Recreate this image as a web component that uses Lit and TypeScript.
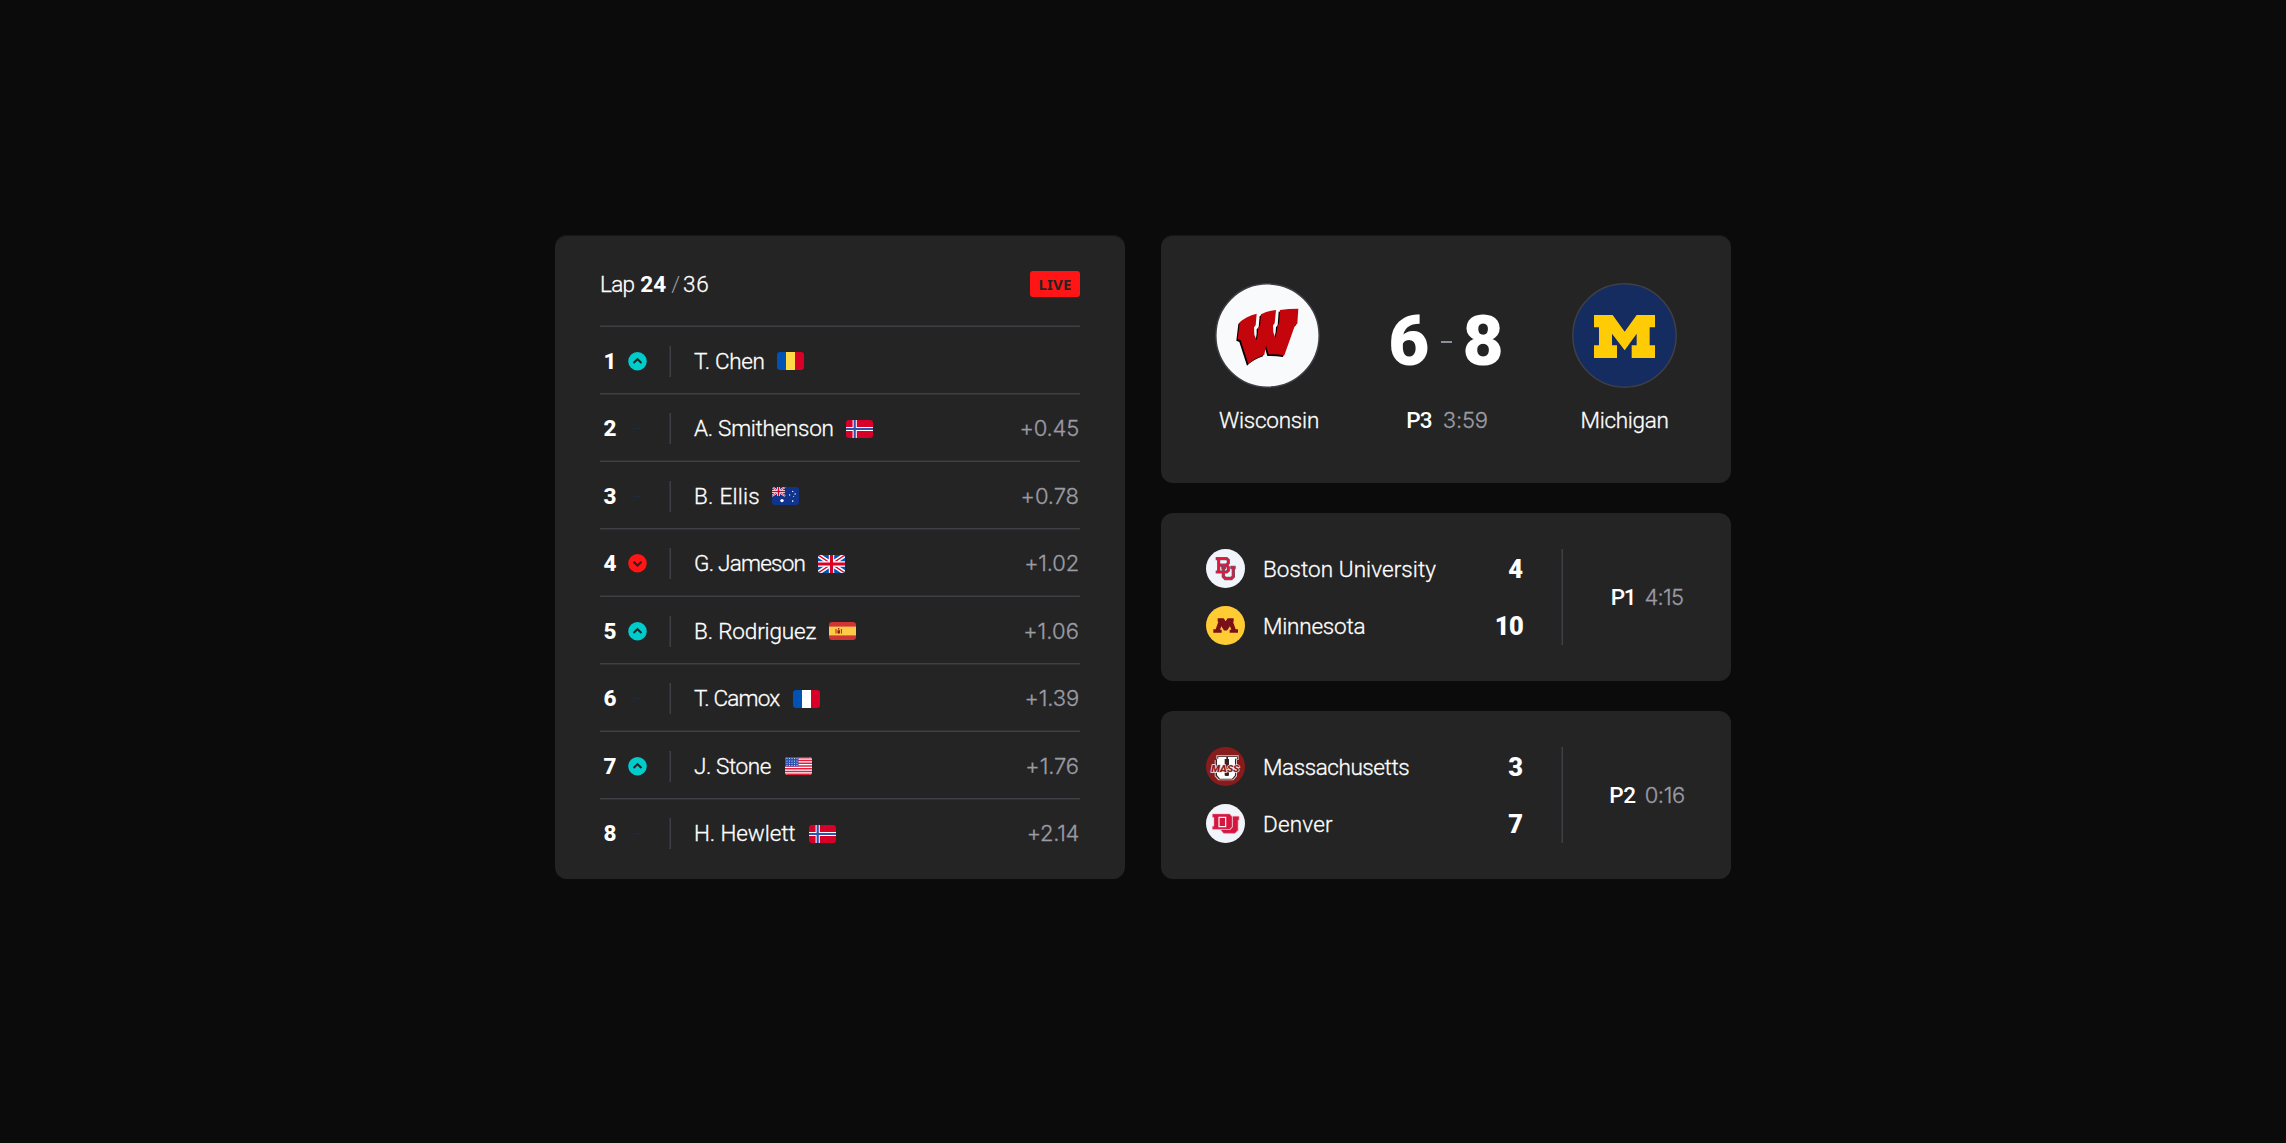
import { LitElement, html, svg, css, nothing, type TemplateResult, type SVGTemplateResult } from "lit";
import { customElement, property } from "lit/decorators.js";
import { classMap } from "lit/directives/class-map.js";
import { styleMap } from "lit/directives/style-map.js";

type Spaced = { text: string; tracking: number };
type Trend = "up" | "down" | "same";
interface Racer {
  pos: number;
  trend: Trend;
  name: Spaced;
  flag: string;
  flagGap: number;
  gap?: Spaced;
}
interface Side {
  name: Spaced;
  emblem: string;
  score: Spaced;
}
interface Game {
  sides: Side[];
  period: Spaced;
  clock: Spaced;
}

const s = (text: string, tracking = 0): Spaced => ({ text, tracking });

const racers: Racer[] = [
  { pos: 1, trend: "up", name: s("T. Chen", -0.34), flag: "ro", flagGap: 12 },
  { pos: 2, trend: "same", name: s("A. Smithenson", -0.28), flag: "no", flagGap: 12, gap: s("+0.45", -0.2) },
  { pos: 3, trend: "same", name: s("B. Ellis", 0.25), flag: "au", flagGap: 12, gap: s("+0.78", -0.07) },
  { pos: 4, trend: "down", name: s("G. Jameson", -0.75), flag: "gb", flagGap: 13, gap: s("+1.02", -0.19) },
  { pos: 5, trend: "up", name: s("B. Rodriguez", -0.15), flag: "es", flagGap: 13, gap: s("+1.06", 0.06) },
  { pos: 6, trend: "same", name: s("T. Camox", -0.8), flag: "fr", flagGap: 13.5, gap: s("+1.39", -0.12) },
  { pos: 7, trend: "up", name: s("J. Stone", -0.4), flag: "us", flagGap: 13.5, gap: s("+1.76", -0.1) },
  { pos: 8, trend: "same", name: s("H. Hewlett", -0.1), flag: "no", flagGap: 13, gap: s("+2.14", -0.35) },
];

const featured: Game = {
  sides: [
    { name: s("Wisconsin", -0.21), emblem: "wisconsin", score: s("6") },
    { name: s("Michigan", -0.3), emblem: "michigan", score: s("8") },
  ],
  period: s("P3", -0.8),
  clock: s("3:59", -0.2),
};

const games: Game[] = [
  {
    sides: [
      { name: s("Boston University", 0.07), emblem: "boston", score: s("4") },
      { name: s("Minnesota", -0.21), emblem: "minnesota", score: s("10", -0.7) },
    ],
    period: s("P1", -1.2),
    clock: s("4:15", -0.73),
  },
  {
    sides: [
      { name: s("Massachusetts", -0.42), emblem: "massachusetts", score: s("3") },
      { name: s("Denver", 0.2), emblem: "denver", score: s("7") },
    ],
    period: s("P2", -0.36),
    clock: s("0:16", -0.4),
  },
];

const stars = (rows: number, cols: number) => {
  const out: SVGTemplateResult[] = [];
  for (let r = 0; r < rows; r++)
    for (let c = 0; c < cols; c++)
      out.push(svg`<circle cx=${2 + c * 2.5} cy=${1.6 + r * 2.3} r="0.5" fill="#fff" />`);
  return out;
};

const FLAGS: Record<string, SVGTemplateResult> = {
  ro: svg`<rect width="9" height="18" fill="#0052b4"/><rect x="9" width="9" height="18" fill="#ffda44"/><rect x="18" width="9" height="18" fill="#d80027"/>`,
  fr: svg`<rect width="9" height="18" fill="#0052b4"/><rect x="9" width="9" height="18" fill="#fff"/><rect x="18" width="9" height="18" fill="#d80027"/>`,
  no: svg`<rect width="27" height="18" fill="#d80027"/><path d="M8.7 0V18M0 9H27" stroke="#fff" stroke-width="4.2"/><path d="M8.7 0V18M0 9H27" stroke="#2e52b2" stroke-width="2.2"/>`,
  gb: svg`<rect width="27" height="18" fill="#0052b4"/><path d="M0 0L27 18M27 0L0 18" stroke="#fff" stroke-width="4.4"/><path d="M0 0L27 18M27 0L0 18" stroke="#d80027" stroke-width="1.4"/><path d="M13.5 0V18M0 9H27" stroke="#fff" stroke-width="5.4"/><path d="M13.5 0V18M0 9H27" stroke="#d80027" stroke-width="3.2"/>`,
  es: svg`<rect width="27" height="18" fill="#d03433"/><rect y="4.6" width="27" height="8.8" fill="#fbca46"/><path d="M7 7v4.600M12.400 7v4.600" stroke="#a41517" stroke-width=".9"/><path d="M8.400 8.200h2.600v2.700l-1.300 1L8.400 10.900z" fill="#a41517"/><circle cx="9.7" cy="6.900" r=".8" fill="#a41517"/>`,
  us: svg`<rect width="27" height="18" fill="#fff"/><path d="M0 .7H27M0 3.5H27M0 6.2H27M0 9H27M0 11.8H27M0 14.5H27M0 17.3H27" stroke="#e31d3c" stroke-width="1.4"/><rect width="13.5" height="9.4" fill="#2e52b2"/>${stars(4, 5)}`,
  au: svg`<rect width="27" height="18" fill="#10338c"/><path d="M0 0L13 9M13 0L0 9" stroke="#fff" stroke-width="2"/><path d="M0 0L13 9M13 0L0 9" stroke="#d80027" stroke-width="0.8"/><path d="M6.5 0V9M0 4.5H13" stroke="#fff" stroke-width="3"/><path d="M6.5 0V9M0 4.5H13" stroke="#d80027" stroke-width="1.6"/><circle cx="10" cy="13.6" r="1.7" fill="#fff"/><g fill="#fff"><circle cx="20.7" cy="4.4" r=".7"/><circle cx="17.6" cy="7.9" r=".7"/><circle cx="23.1" cy="7" r=".7"/><circle cx="20.7" cy="14.1" r=".8"/><circle cx="21.7" cy="9.4" r=".5"/></g>`,
};

const badger = "M29 68Q48 50 80 42L77 77L72 81L73 105L80 122L84 97L84 84L90 78L93 44Q112 34 138 31L134 71L129 76L130 98L136 115L141 92L142 78L147 72L150 31Q175 27 205 27L202 72L195 77L163 167Q140 163 116 164L108 138L103 165Q75 174 55 193L32 122L23 118Z";
const EMBLEMS: Record<string, { box: string; art: SVGTemplateResult }> = {
  wisconsin: {
    box: "-45 -50 315 315",
    art: svg`<circle cx="112.5" cy="107.5" r="155" fill="#f9fafb" stroke="#3f3f46" stroke-width="4.5"/><path transform="translate(-4 5)" d=${badger} fill="#000"/><path d=${badger} fill="#c5050c"/>`,
  },
  michigan: {
    box: "351 159 315 315",
    art: svg`<circle cx="508.5" cy="316.5" r="155" fill="#152c61" stroke="#3f3f46" stroke-width="4.5"/><polygon fill="#ffcb05" points="417,255 473,255 509,305 545,255 600,255 600,292 584,292 584,346 600,346 600,384 530,384 530,346 545,346 545,311 509,361 471,311 471,346 486,346 486,384 417,384 417,346 432,346 432,292 417,292"/>`,
  },
  boston: {
    box: "153 131.5 117 117",
    art: svg`<circle cx="211.5" cy="190" r="58.5" fill="#f1f5fb"/><g fill="none"><path d="M199 187H213M226 187H242M205 187V214L211 220H229L235 214V187" stroke="#5b6070" stroke-width="10"/><path d="M200 187H212M227 187H241M205 187V214L211 220H229L235 214V187" stroke="#e2173a" stroke-width="6"/><path d="M182 160.500H215L220 165V174L214 180L220 186V196L215 200.500H182M191 161V200M191 180H214" stroke="#5b6070" stroke-width="9.500"/><path d="M184 160.500H215L219.500 165V174L214 180L219.500 186V196L215 200.500H184M191 161V200M191 180H214" stroke="#e2173a" stroke-width="6"/></g>`,
  },
  minnesota: {
    box: "153 302.5 117 117",
    art: svg`<circle cx="211.5" cy="361" r="58.5" fill="#ffcc33"/><polygon fill="#7a1019" points="188,339 206,339 212,348 218,339 236,339 236,350 234,350 242,372 249,372 249,383 224,383 224,374 229,374 225,363 216,376 207,376 199,363 195,374 200,374 200,383 175,383 175,372 182,372 190,350 188,350"/>`,
  },
  massachusetts: {
    box: "153 141 117 117",
    art: svg`<circle cx="211.5" cy="199.5" r="58.5" fill="#881c1c"/><path d="M184 166H251V180H246V229L235 241H190L179 229V180H184Z" fill="#d9c4c1"/><path d="M187 168.500H248.500V178H243V227L233 238.500H193L182 227V178H187Z" fill="#3a2020"/><path d="M190 171H214V177H209V225Q209 228 213 228H218Q222 228 222 225V177H219V171H246V176H240V226L231 236H195L186 226V176H190Z" fill="#fff"/><text class="mark" x="211" y="215" text-anchor="middle" textLength="84" lengthAdjust="spacingAndGlyphs">MASS</text>`,
  },
  denver: {
    box: "153 312 117 117",
    art: svg`<circle cx="211.5" cy="370.5" r="58.5" fill="#f1f5fb"/><path d="M224 349H252V360H249V391L240 400H206L198 391V387H226L231 382V360H224Z" fill="#d5163f" stroke="#e889a0" stroke-width="2"/><path d="M171.500 341H225L233 349V381L225 390H171.500V378H176V353H171.500Z" fill="#f1f5fb"/><path d="M172.500 342H224L231 350V380L224 388H172.500V379H177V352H172.500Z" fill="#d5163f" stroke="#e889a0" stroke-width="1.500"/><rect x="192" y="352" width="20" height="28" fill="#d5163f" stroke="#fff" stroke-width="3.500"/>`,
  },
};

const spaced = (cls: string, v: Spaced): TemplateResult =>
  html`<span class=${cls} style=${styleMap({ letterSpacing: `${v.tracking}px` })}>${v.text}</span>`;

const shared = css`
  * { box-sizing: border-box; }
  .card {
    background: #242424;
    border-radius: 12px;
  }
  .soft-top { box-shadow: inset 0 1px 0 #181818; }
  svg { display: block; flex: none; }
  .name, .clock, .gap, .lap-word, .lap-total { -webkit-text-stroke: 0.3px currentColor; }
  .period { font-weight: 500; }
  .clock { color: #9b9ba4; font-family: Inter, "Liberation Sans", sans-serif; font-size: 22px; margin-left: 11px; }
  .mark {
    font: italic 900 26px Roboto, sans-serif;
    fill: #881c1c;
    stroke: #f4e6e4;
    stroke-width: 4px;
    paint-order: stroke;
  }
`;

const emblem = (key: string, size: number) =>
  html`<svg width=${size} height=${size} viewBox=${EMBLEMS[key].box}>${EMBLEMS[key].art}</svg>`;

@customElement("race-board")
export class RaceBoard extends LitElement {
  @property({ attribute: false }) racers: Racer[] = [];

  static styles = [
    shared,
    css`
      :host { display: block; }
      .card { height: 644px; padding: 0 45px; }
      .head {
        display: flex;
        align-items: center;
        justify-content: space-between;
        height: 90px;
        padding-top: 8px;
      }
      .lap { display: flex; padding-top: 1px; }
      .lap-word { letter-spacing: -0.7px; margin-right: 6px; }
      .lap-now { font-weight: 700; margin-right: 5px; }
      .slash { color: #9b9ba4; margin-right: 3px; }
      .lap-total { letter-spacing: 0.8px; }
      .live {
        display: flex;
        align-items: center;
        justify-content: center;
        width: 50px;
        height: 26px;
        border-radius: 3px;
        background: #ff1515;
        color: #242424;
        font: 700 15px/18px "Noto Sans", sans-serif;
        letter-spacing: 0.2px;
      }
      .row {
        display: flex;
        align-items: center;
        height: 68px;
        padding-top: 4.5px;
        background: linear-gradient(#313135 1px, #3f3f46 1px) 0 0 / 100% 2px no-repeat;
      }
      .row.even {
        height: 67px;
        padding-top: 4px;
        background: linear-gradient(#3f3f46 1px, #313135 1px) 0 0 / 100% 2px no-repeat;
      }
      .pos { width: 20px; font-weight: 800; text-align: center; }
      .trend { margin: 0 22px 0 8px; }
      .bar {
        width: 2px;
        height: 31px;
        margin-right: 23px;
        background: linear-gradient(90deg, #313135 1px, #3f3f46 1px);
      }
      .flag { border-radius: 3px; }
      .gap {
        margin: 0 1px 0 auto;
        color: #9b9ba4;
        font-family: Inter, "Liberation Sans", sans-serif;
        font-size: 22px;
      }
    `,
  ];

  private trend(t: Trend) {
    const glyph =
      t === "same"
        ? svg`<path d="M6 9.700H13" stroke="#1f2a40" stroke-width="1.500"/>`
        : svg`<circle cx="9.500" cy="9.250" r="9.250" fill=${t === "up" ? "#00cccc" : "#ff1515"}/>
            <path d=${t === "up" ? "M5.500 11L9.500 7.200L13.500 11" : "M5.500 7.700L9.500 11.500L13.500 7.700"} fill="none" stroke="#242424" stroke-width="2"/>`;
    return html`<svg class="trend" width="19" height="19" viewBox="0 0 19 19">${glyph}</svg>`;
  }

  render() {
    return html`
      <section class="card soft-top">
        <header class="head">
          <div class="lap">
            <span class="lap-word">Lap</span><span class="lap-now">24</span><span class="slash">/</span><span class="lap-total">36</span>
          </div>
          <span class="live">LIVE</span>
        </header>
        ${this.racers.map(
          (r, i) => html`
            <div class=${classMap({ row: true, even: i % 2 === 1 })}>
              <span class="pos">${r.pos}</span>
              ${this.trend(r.trend)}
              <span class="bar"></span>
              ${spaced("name", r.name)}
              <svg class="flag" style=${styleMap({ marginLeft: `${r.flagGap}px` })} width="27" height="18" viewBox="0 0 27 18">${FLAGS[r.flag]}</svg>
              ${r.gap ? spaced("gap", r.gap) : nothing}
            </div>
          `,
        )}
      </section>
    `;
  }
}

@customElement("featured-game")
export class FeaturedGame extends LitElement {
  @property({ attribute: false }) game!: Game;

  static styles = [
    shared,
    css`
      :host { display: block; }
      .card {
        display: flex;
        justify-content: space-between;
        height: 248px;
        padding: 48px 54px 0;
      }
      .col { display: flex; flex-direction: column; align-items: center; }
      .team { width: 105px; }
      .name { margin-top: 19px; line-height: 27px; white-space: nowrap; }
      .wisconsin { padding-left: 3px; }
      .result {
        display: flex;
        align-items: center;
        height: 105px;
        padding-top: 10px;
        font-size: 71px;
        font-weight: 900;
      }
      .dash { width: 11px; height: 2px; margin: 3px 11px 0; background: #8b919c; }
      .status { display: flex; margin-top: 19px; line-height: 27px; padding-left: 2px; }
    `,
  ];

  render() {
    const [a, b] = this.game.sides;
    const team = (t: Side) => html`
      <div class="col team">${emblem(t.emblem, 105)}${spaced(`name ${t.emblem}`, t.name)}</div>
    `;
    return html`
      <section class="card soft-top">
        ${team(a)}
        <div class="col">
          <div class="result"><span>${a.score.text}</span><i class="dash"></i><span>${b.score.text}</span></div>
          <div class="status">${spaced("period", this.game.period)}${spaced("clock", this.game.clock)}</div>
        </div>
        ${team(b)}
      </section>
    `;
  }
}

@customElement("game-card")
export class GameCard extends LitElement {
  @property({ attribute: false }) game!: Game;

  static styles = [
    shared,
    css`
      :host { display: block; }
      .card { display: flex; height: 168px; padding: 36px 0 36px 45px; }
      .teams { display: flex; flex-direction: column; gap: 18px; width: 317px; }
      .team { display: flex; align-items: center; height: 39px; }
      .name { margin-left: 18px; padding-top: 1px; }
      .score { margin-left: auto; padding-top: 2px; font-size: 25.5px; font-weight: 900; }
      .bar {
        width: 2px;
        margin-left: 38px;
        background: linear-gradient(90deg, #313135 1px, #3f3f46 1px);
      }
      .status { display: flex; flex: 1; align-items: center; justify-content: center; padding-top: 1px; }
      .clock { margin-left: 9px; }
    `,
  ];

  render() {
    return html`
      <section class="card">
        <div class="teams">
          ${this.game.sides.map(
            (t) => html`<div class="team">${emblem(t.emblem, 39)}${spaced("name", t.name)}${spaced("score", t.score)}</div>`,
          )}
        </div>
        <span class="bar"></span>
        <div class="status">${spaced("period", this.game.period)}${spaced("clock", this.game.clock)}</div>
      </section>
    `;
  }
}

@customElement("app-root")
export class AppRoot extends LitElement {
  static styles = css`
    :host {
      display: block;
      height: 1143px;
      background: #0b0b0b;
      color: #fff;
      font: 300 22.5px/27px Roboto, "Liberation Sans", sans-serif;
    }
    .board {
      display: grid;
      grid-template-columns: 570px 570px;
      justify-content: center;
      column-gap: 36px;
      padding-top: 235px;
    }
    .games { display: flex; flex-direction: column; gap: 30px; }
  `;

  render() {
    return html`
      <main class="board">
        <race-board .racers=${racers}></race-board>
        <div class="games">
          <featured-game .game=${featured}></featured-game>
          ${games.map((g) => html`<game-card .game=${g}></game-card>`)}
        </div>
      </main>
    `;
  }
}
